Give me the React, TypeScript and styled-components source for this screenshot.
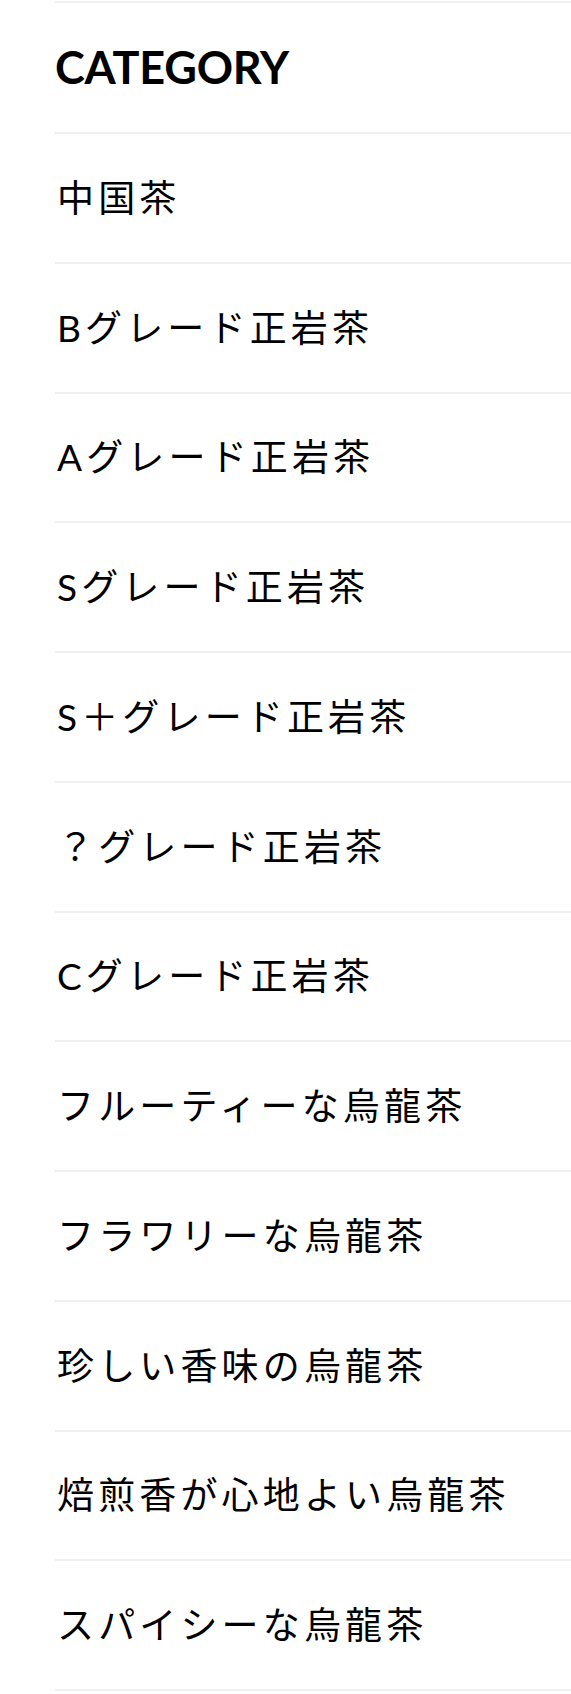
import React from 'react';
import styled, { createGlobalStyle } from 'styled-components';

const GlobalStyle = createGlobalStyle`
  html, body {
    margin: 0;
    padding: 0;
    background: #fff;
  }
  body {
    font-family: Lato, "Noto Sans CJK JP", sans-serif;
    color: #000;
  }
`;

const Sidebar = styled.aside`
  padding: 1px 0 0 55px;
`;

const CategoryList = styled.ul`
  list-style: none;
  margin: 0;
  padding: 0;
  border-bottom: 2px solid #efeff4;
`;

const HeaderItem = styled.li`
  box-sizing: border-box;
  height: 131px;
  display: flex;
  align-items: center;
  padding: 0 0 2px 0;
  border-top: 2px solid #efeff4;
  font-family: Lato, sans-serif;
  font-weight: 700;
  font-size: 45px;
  letter-spacing: -0.2px;
`;

const CategoryItem = styled.li`
  box-sizing: border-box;
  height: 129.75px;
  display: flex;
  align-items: center;
  border-top: 2px solid #efeff4;
`;

const CategoryLink = styled.a`
  display: block;
  padding-left: 2px;
  color: #000;
  text-decoration: none;
  font-family: Lato, "Noto Sans CJK JP", sans-serif;
  font-size: 37px;
  font-weight: 400;
  letter-spacing: 4.15px;
  line-height: 1.4;
`;

const categories = [
  '中国茶',
  'Bグレード正岩茶',
  'Aグレード正岩茶',
  'Sグレード正岩茶',
  'S＋グレード正岩茶',
  '？グレード正岩茶',
  'Cグレード正岩茶',
  'フルーティーな烏龍茶',
  'フラワリーな烏龍茶',
  '珍しい香味の烏龍茶',
  '焙煎香が心地よい烏龍茶',
  'スパイシーな烏龍茶',
];

const App = () => {
  return (
    <>
      <GlobalStyle />
      <Sidebar>
        <CategoryList>
          <HeaderItem>CATEGORY</HeaderItem>
          {categories.map((name) => (
            <CategoryItem key={name}>
              <CategoryLink href='#'>{name}</CategoryLink>
            </CategoryItem>
          ))}
        </CategoryList>
      </Sidebar>
    </>
  );
};

export default App;
